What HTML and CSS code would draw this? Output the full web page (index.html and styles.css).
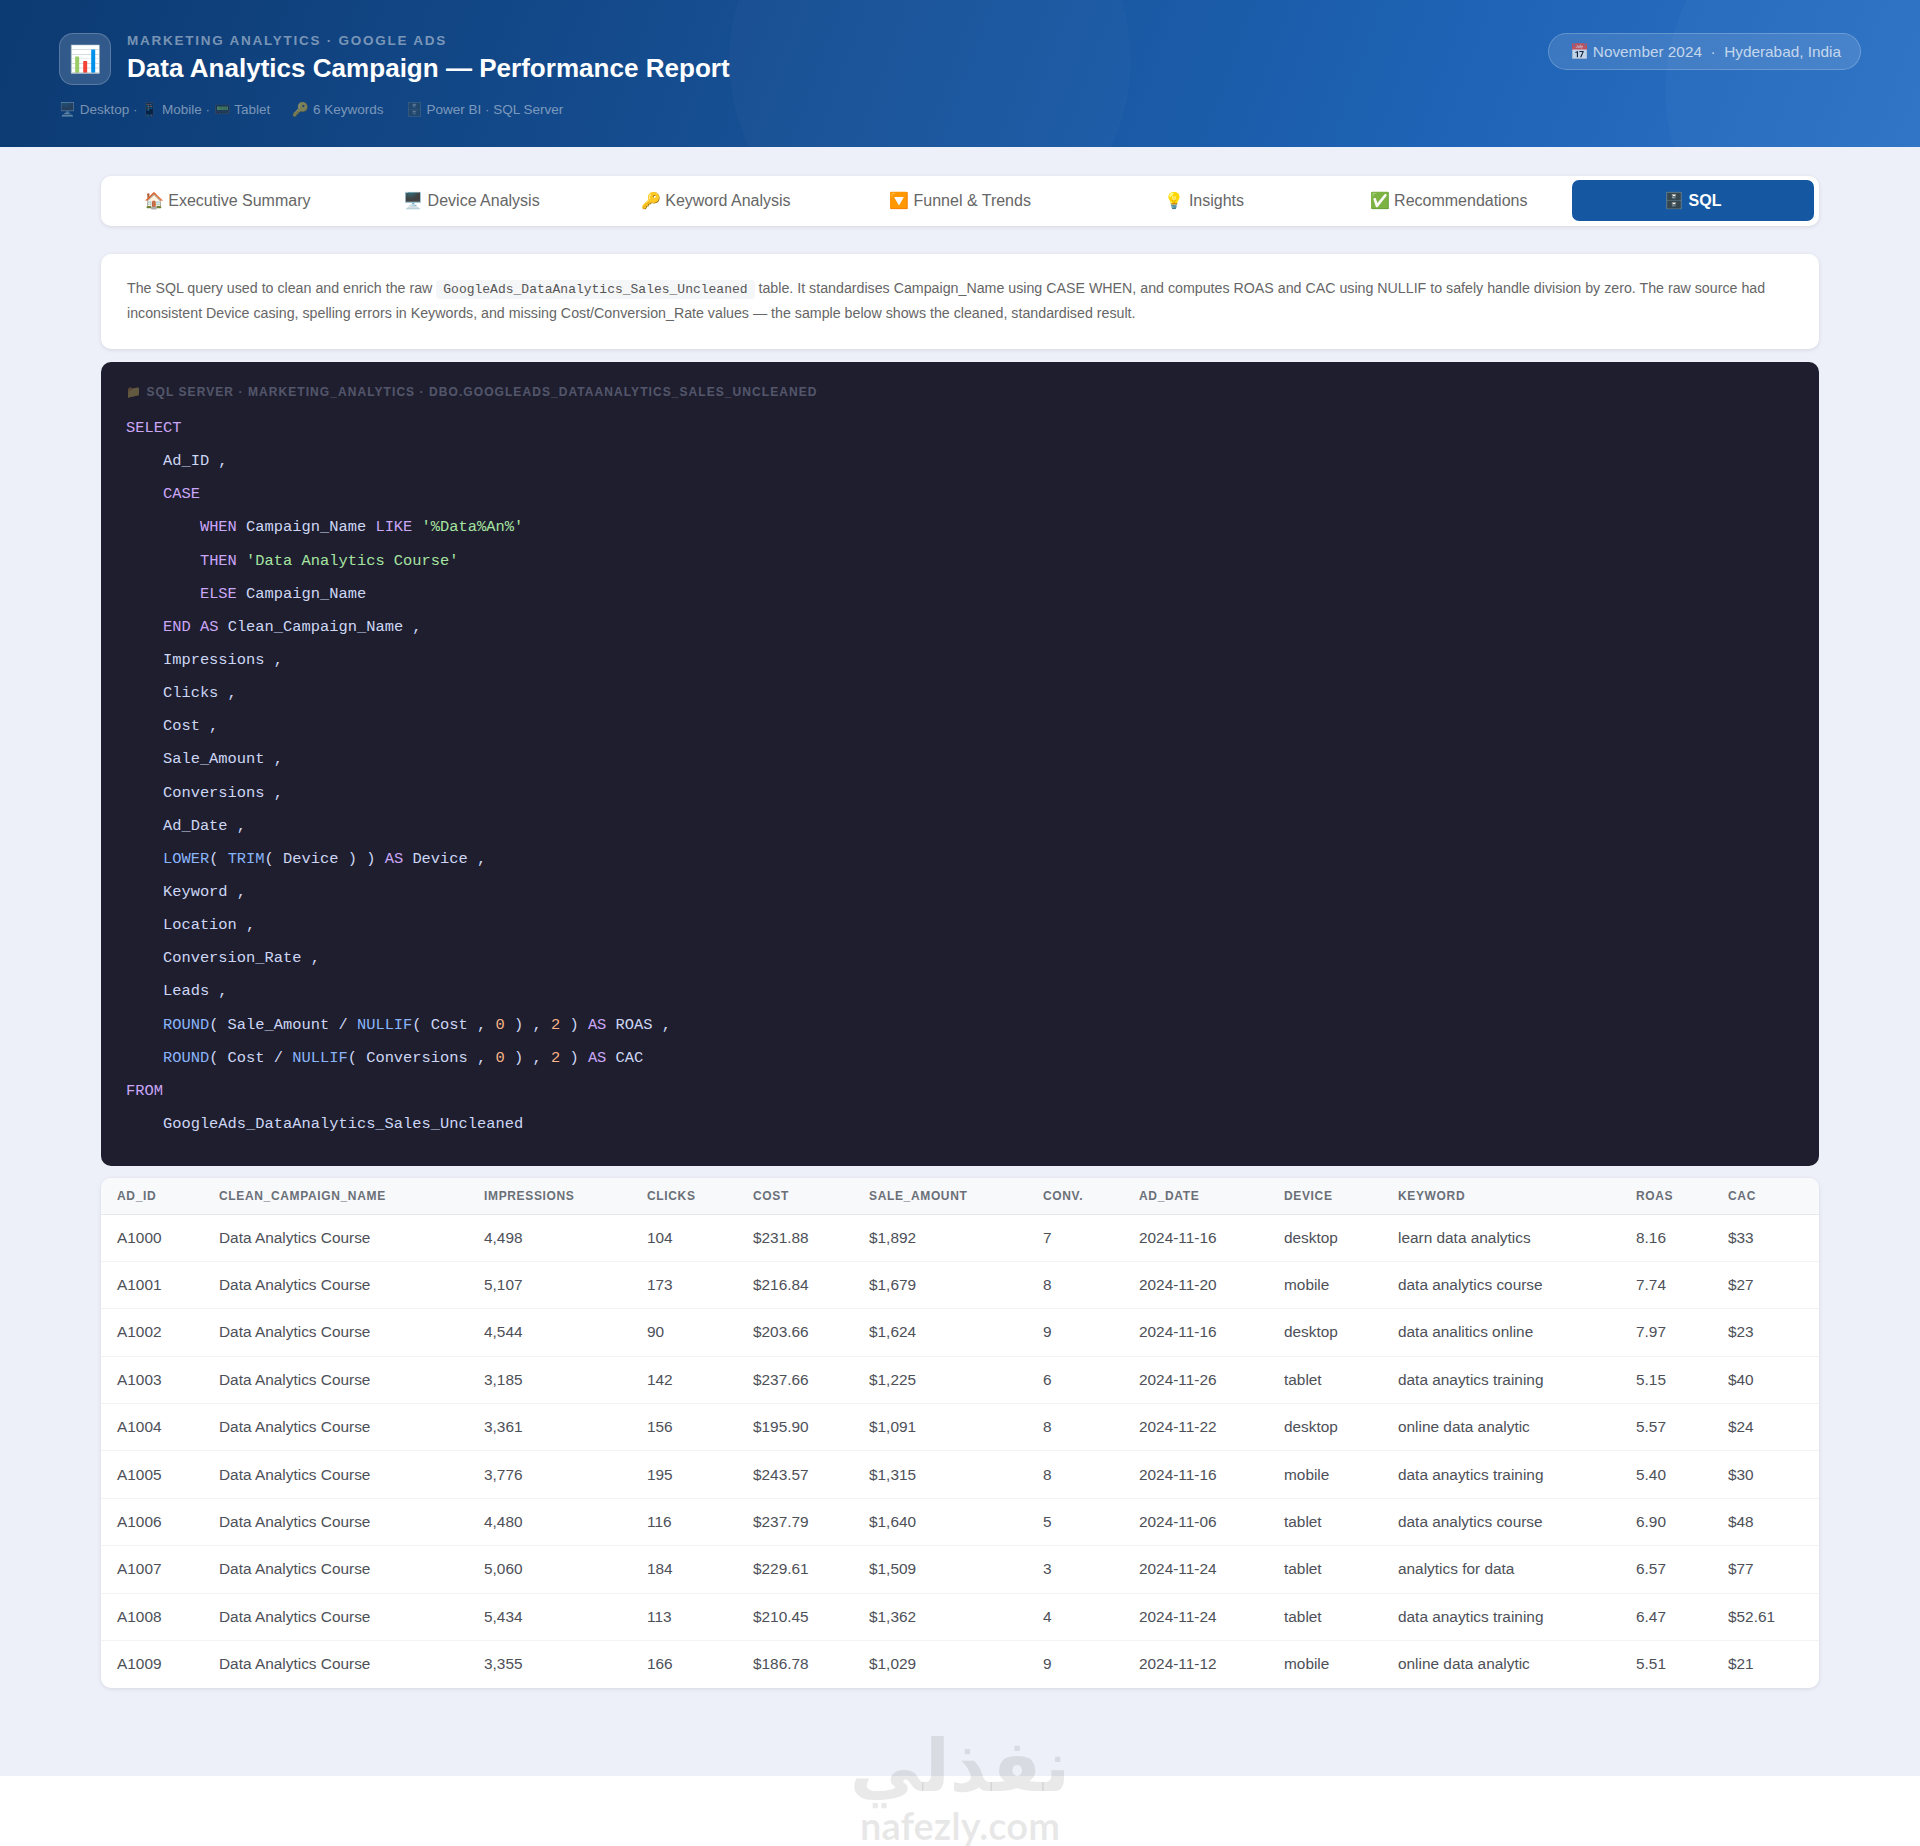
FILE: index.html
```html
<!DOCTYPE html>
<html lang="en">

<head>
    <meta charset="UTF-8">
    <meta name="viewport" content="width=device-width, initial-scale=1.0">
    <title>Data Analytics Campaign — Performance Report</title>
    <link rel="stylesheet" href="styles.css">
</head>

<body>
    <header class="top">
        <div class="top_left">
            <div class="brand">
                <div class="brand_icon">📊</div>
                <div>
                    <div class="eyebrow">Marketing Analytics · Google Ads</div>
                    <h1>Data Analytics Campaign — Performance Report</h1>
                </div>
            </div>
            <div class="meta">
                <span>🖥️ Desktop · 📱 Mobile · 📟 Tablet</span>
                <span>🔑 6 Keywords</span>
                <span>🗄️ Power BI · SQL Server</span>
            </div>
        </div>
        <div class="pill">📅 November 2024 &nbsp;·&nbsp; Hyderabad, India</div>
    </header>

    <main class="wrap">
        <nav class="tabs">
            <a href="#">🏠 Executive Summary</a>
            <a href="#">🖥️ Device Analysis</a>
            <a href="#">🔑 Keyword Analysis</a>
            <a href="#">🔽 Funnel &amp; Trends</a>
            <a href="#">💡 Insights</a>
            <a href="#">✅ Recommendations</a>
            <a href="#" class="active">🗄️ SQL</a>
        </nav>

        <section class="intro">
            The SQL query used to clean and enrich the raw <code>GoogleAds_DataAnalytics_Sales_Uncleaned</code> table. It standardises Campaign_Name using CASE WHEN, and computes ROAS and CAC using NULLIF to safely handle division by zero. The raw source had inconsistent Device casing, spelling errors in Keywords, and missing Cost/Conversion_Rate values — the sample below shows the cleaned, standardised result.
        </section>

        <section class="code">
            <div class="code_label">📁 SQL Server · Marketing_Analytics · dbo.GoogleAds_DataAnalytics_Sales_Uncleaned</div>
<pre><b>SELECT</b>
    Ad_ID ,
    <b>CASE</b>
        <b>WHEN</b> Campaign_Name <b>LIKE</b> <s>'%Data%An%'</s>
        <b>THEN</b> <s>'Data Analytics Course'</s>
        <b>ELSE</b> Campaign_Name
    <b>END</b> <b>AS</b> Clean_Campaign_Name ,
    Impressions ,
    Clicks ,
    Cost ,
    Sale_Amount ,
    Conversions ,
    Ad_Date ,
    <i>LOWER</i>( <i>TRIM</i>( Device ) ) <b>AS</b> Device ,
    Keyword ,
    Location ,
    Conversion_Rate ,
    Leads ,
    <i>ROUND</i>( Sale_Amount / <i>NULLIF</i>( Cost , <u>0</u> ) , <u>2</u> ) <b>AS</b> ROAS ,
    <i>ROUND</i>( Cost / <i>NULLIF</i>( Conversions , <u>0</u> ) , <u>2</u> ) <b>AS</b> CAC
<b>FROM</b>
    GoogleAds_DataAnalytics_Sales_Uncleaned</pre>
        </section>

        <section class="sample">
            <table>
                <thead>
                    <tr>
                        <th>Ad_ID</th><th>Clean_Campaign_Name</th><th>Impressions</th><th>Clicks</th><th>Cost</th><th>Sale_Amount</th><th>Conv.</th><th>Ad_Date</th><th>Device</th><th>Keyword</th><th>ROAS</th><th>CAC</th>
                    </tr>
                </thead>
                <tbody>
                    <tr><td>A1000</td><td>Data Analytics Course</td><td>4,498</td><td>104</td><td>$231.88</td><td>$1,892</td><td>7</td><td>2024-11-16</td><td>desktop</td><td>learn data analytics</td><td>8.16</td><td>$33</td></tr>
                    <tr><td>A1001</td><td>Data Analytics Course</td><td>5,107</td><td>173</td><td>$216.84</td><td>$1,679</td><td>8</td><td>2024-11-20</td><td>mobile</td><td>data analytics course</td><td>7.74</td><td>$27</td></tr>
                    <tr><td>A1002</td><td>Data Analytics Course</td><td>4,544</td><td>90</td><td>$203.66</td><td>$1,624</td><td>9</td><td>2024-11-16</td><td>desktop</td><td>data analitics online</td><td>7.97</td><td>$23</td></tr>
                    <tr><td>A1003</td><td>Data Analytics Course</td><td>3,185</td><td>142</td><td>$237.66</td><td>$1,225</td><td>6</td><td>2024-11-26</td><td>tablet</td><td>data anaytics training</td><td>5.15</td><td>$40</td></tr>
                    <tr><td>A1004</td><td>Data Analytics Course</td><td>3,361</td><td>156</td><td>$195.90</td><td>$1,091</td><td>8</td><td>2024-11-22</td><td>desktop</td><td>online data analytic</td><td>5.57</td><td>$24</td></tr>
                    <tr><td>A1005</td><td>Data Analytics Course</td><td>3,776</td><td>195</td><td>$243.57</td><td>$1,315</td><td>8</td><td>2024-11-16</td><td>mobile</td><td>data anaytics training</td><td>5.40</td><td>$30</td></tr>
                    <tr><td>A1006</td><td>Data Analytics Course</td><td>4,480</td><td>116</td><td>$237.79</td><td>$1,640</td><td>5</td><td>2024-11-06</td><td>tablet</td><td>data analytics course</td><td>6.90</td><td>$48</td></tr>
                    <tr><td>A1007</td><td>Data Analytics Course</td><td>5,060</td><td>184</td><td>$229.61</td><td>$1,509</td><td>3</td><td>2024-11-24</td><td>tablet</td><td>analytics for data</td><td>6.57</td><td>$77</td></tr>
                    <tr><td>A1008</td><td>Data Analytics Course</td><td>5,434</td><td>113</td><td>$210.45</td><td>$1,362</td><td>4</td><td>2024-11-24</td><td>tablet</td><td>data anaytics training</td><td>6.47</td><td>$52.61</td></tr>
                    <tr><td>A1009</td><td>Data Analytics Course</td><td>3,355</td><td>166</td><td>$186.78</td><td>$1,029</td><td>9</td><td>2024-11-12</td><td>mobile</td><td>online data analytic</td><td>5.51</td><td>$21</td></tr>
                </tbody>
            </table>
        </section>
    </main>

    <!-- watermark over the page bottom -->
    <div class="mark">
        <div class="mark_ar" lang="ar" dir="rtl">نفذلي</div>
        <div class="mark_en">nafezly.com</div>
    </div>
</body>

</html>
```
FILE: styles.css
```css
* {
    margin: 0;
    padding: 0;
    box-sizing: border-box;
}

html {
    background-color: #fff;
}

body {
    position: relative;
    height: 1846px;
    overflow: hidden;
    font-family: "Liberation Sans", Arial, sans-serif;
    color: #444;
}

.top {
    display: flex;
    justify-content: space-between;
    align-items: flex-start;
    height: 147px;
    padding: 33px 59px 0;
    overflow: hidden;
    background:
        radial-gradient(circle at 1866px 90px, rgba(255, 255, 255, .025) 0 200px, transparent 201px),
        radial-gradient(circle at 930px 60px, rgba(255, 255, 255, .02) 0 200px, transparent 201px),
        linear-gradient(110deg, #0c3a72 0%, #164f93 40%, #1e63b5 75%, #2c72c6 100%);
}

.brand {
    display: flex;
    align-items: center;
    gap: 16px;
}

.brand_icon {
    display: flex;
    align-items: center;
    justify-content: center;
    width: 52px;
    height: 52px;
    font-size: 26px;
    background-color: rgba(255, 255, 255, .15);
    border: 1px solid rgba(255, 255, 255, .2);
    border-radius: 14px;
}

.eyebrow {
    font-size: 13.5px;
    font-weight: 700;
    line-height: 16px;
    letter-spacing: 1.75px;
    text-transform: uppercase;
    color: rgba(255, 255, 255, .45);
}

h1 {
    margin-top: 2px;
    font-size: 26.05px;
    line-height: 34px;
    font-weight: 700;
    color: #fff;
}

.meta {
    display: flex;
    gap: 22px;
    margin-top: 17px;
    font-size: 13.5px;
    line-height: 16px;
    color: rgba(255, 255, 255, .45);
}

.pill {
    height: 37px;
    line-height: 35px;
    padding: 0 19px 0 21px;
    font-size: 15.35px;
    color: rgba(255, 255, 255, .7);
    background-color: rgba(255, 255, 255, .12);
    border: 1px solid rgba(255, 255, 255, .2);
    border-radius: 19px;
}

.wrap {
    display: flex;
    flex-direction: column;
    height: 1629px;
    padding: 29px 101px 0;
    background-color: #edf0f8;
}

.tabs {
    display: flex;
    gap: 2px;
    height: 50px;
    padding: 4px 5px 5px;
    background-color: #fff;
    border-radius: 10px;
    box-shadow: 0 1px 4px rgba(0, 0, 0, .1);
}

.tabs a {
    flex: 1;
    line-height: 42px;
    text-align: center;
    text-decoration: none;
    font-size: 16px;
    color: #666;
    border-radius: 7px;
}

.tabs a.active {
    font-weight: 700;
    color: #fff;
    background-color: #1557a0;
}

.intro {
    height: 95px;
    margin-top: 28px;
    padding: 22px 26px;
    font-size: 14.23px;
    line-height: 24.5px;
    color: #666;
    background-color: #fff;
    border-radius: 10px;
    box-shadow: 0 1px 4px rgba(0, 0, 0, .1);
}

.intro code {
    padding: 2px 7px;
    font-family: "Liberation Mono", monospace;
    font-size: 13px;
    line-height: 1;
    color: #555;
    background-color: #f5f6f8;
    border-radius: 4px;
}

.code {
    height: 804px;
    margin-top: 13px;
    padding: 23px 25px 0;
    background-color: #1e1e2e;
    border-radius: 10px;
}

.code_label {
    font-size: 12px;
    font-weight: 700;
    line-height: 14px;
    letter-spacing: 1.07px;
    text-transform: uppercase;
    color: #cdd6f4;
    opacity: .3;
}

.code pre {
    margin-top: 13px;
    font-family: "Liberation Mono", monospace;
    font-size: 15.4px;
    line-height: 33.14px;
    color: #cdd6f4;
}

.code b {
    font-weight: 400;
    color: #cba6f7;
}

.code i {
    font-style: normal;
    color: #89b4fa;
}

.code s {
    text-decoration: none;
    color: #a6e3a1;
}

.code u {
    text-decoration: none;
    color: #fab387;
}

.sample {
    margin-top: 12px;
    background-color: #fff;
    border-radius: 10px;
    box-shadow: 0 1px 4px rgba(0, 0, 0, .1);
    overflow: hidden;
}

table {
    width: 100%;
    table-layout: fixed;
    border-collapse: collapse;
}

th {
    height: 36px;
    padding: 0 16px;
    text-align: left;
    font-size: 12px;
    letter-spacing: .65px;
    text-transform: uppercase;
    color: #6b7078;
    background-color: #f8f9fb;
    border-bottom: 1px solid #e6e8ee;
}

th:nth-child(1) { width: 102px; }
th:nth-child(2) { width: 265px; }
th:nth-child(3) { width: 163px; }
th:nth-child(4) { width: 106px; }
th:nth-child(5) { width: 116px; }
th:nth-child(6) { width: 174px; }
th:nth-child(7) { width: 96px; }
th:nth-child(8) { width: 145px; }
th:nth-child(9) { width: 114px; }
th:nth-child(10) { width: 238px; }
th:nth-child(11) { width: 92px; }

td {
    height: 47.4px;
    padding: 0 16px;
    font-size: 15.4px;
    color: #4d5058;
    border-bottom: 1px solid #f2f3f6;
}

tr:last-child td {
    border-bottom: 0;
}

.mark {
    position: absolute;
    left: 0;
    right: 0;
    top: 1728px;
    text-align: center;
    color: rgba(70, 70, 70, .12);
    pointer-events: none;
}

.mark_ar {
    height: 76px;
    font-family: "DejaVu Sans", sans-serif;
    font-size: 72px;
    font-weight: 700;
    line-height: 76px;
}

.mark_en {
    margin-top: 2px;
    font-family: "Lato", sans-serif;
    font-size: 38px;
    font-weight: 700;
    line-height: 38px;
}
```
